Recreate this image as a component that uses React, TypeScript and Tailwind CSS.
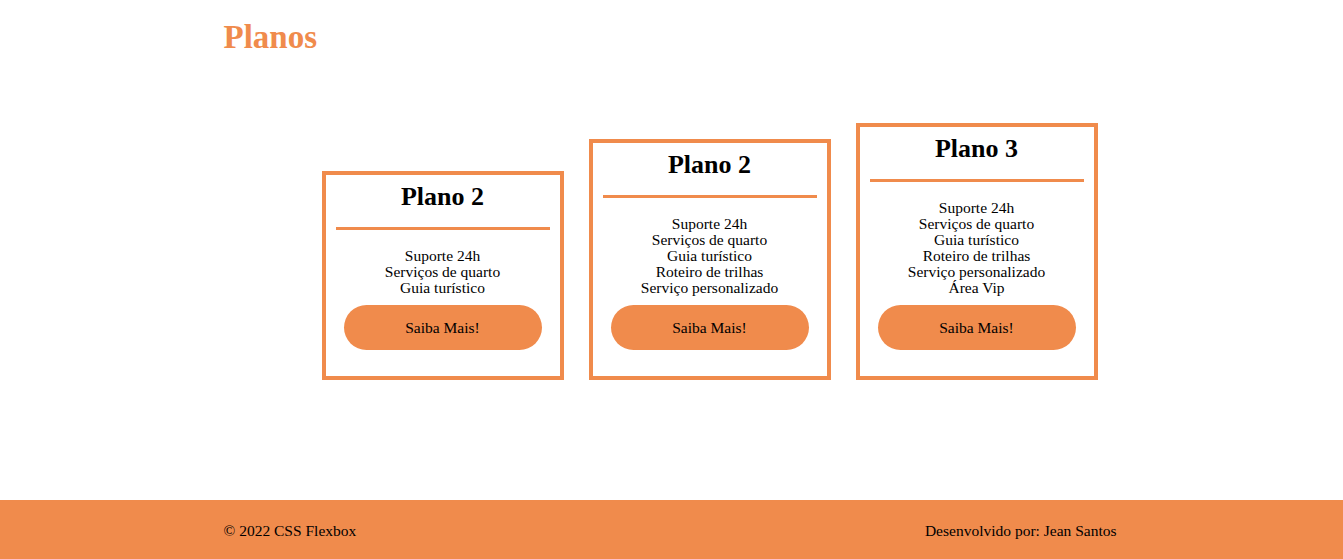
const orange = "bg-[#f08b4c]";

type Plan = { title: string; items: string[] };

const plans: Plan[] = [
  { title: "Plano 2", items: ["Suporte 24h", "Serviços de quarto", "Guia turístico"] },
  {
    title: "Plano 2",
    items: ["Suporte 24h", "Serviços de quarto", "Guia turístico", "Roteiro de trilhas", "Serviço personalizado"],
  },
  {
    title: "Plano 3",
    items: [
      "Suporte 24h",
      "Serviços de quarto",
      "Guia turístico",
      "Roteiro de trilhas",
      "Serviço personalizado",
      "Área Vip",
    ],
  },
];

function PlanCard({ plan }: { plan: Plan }) {
  return (
    <div className="w-[242px] border-4 border-[#f08b4c] px-[10px] text-center">
      <h2 className="pt-[9px] text-[26px] leading-[25px] font-bold text-black">{plan.title}</h2>
      <div className={`mt-[18px] h-[3px] ${orange}`} />
      <ul className="mt-[18px] text-[15.5px] leading-[16px] text-black">
        {plan.items.map((item) => (
          <li key={item}>{item}</li>
        ))}
      </ul>
      <button
        type="button"
        className={`mx-auto mt-[9px] mb-[26px] block h-[45px] w-[198px] rounded-full ${orange} text-[15.5px] text-black`}
      >
        Saiba Mais!
      </button>
    </div>
  );
}

export default function App() {
  return (
    <div className="min-h-[559px] bg-white font-['Liberation_Serif',serif]">
      <header className="mx-auto w-[896px] pt-[21px]">
        <h1 className="text-[33px] leading-[32px] font-bold text-[#f08b4c]">Planos</h1>
      </header>

      <main className="mx-auto mt-[70px] flex w-[896px] items-end gap-[25px] pl-[98px]">
        {plans.map((plan, i) => (
          <PlanCard key={i} plan={plan} />
        ))}
      </main>

      <footer className={`mt-[120px] h-[59px] ${orange}`}>
        <div className="mx-auto flex h-full w-[896px] items-center justify-between pt-[2px] text-[15.5px] text-black">
          <span>© 2022 CSS Flexbox</span>
          <span className="pr-[3px]">Desenvolvido por: Jean Santos</span>
        </div>
      </footer>
    </div>
  );
}
